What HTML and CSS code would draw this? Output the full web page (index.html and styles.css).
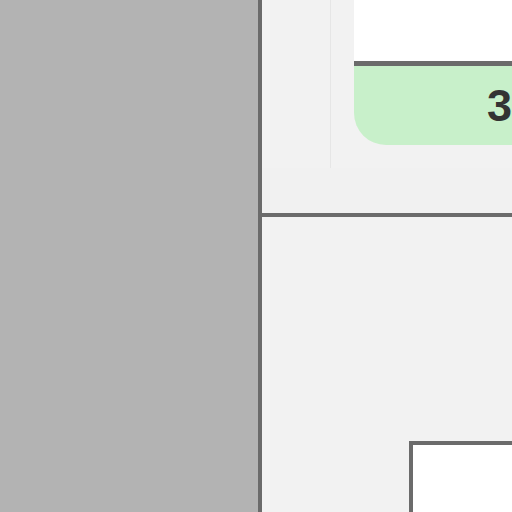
FILE: index.html
```html
<!DOCTYPE html>
<html>
<head>
<meta charset="utf-8">
<link rel="stylesheet" href="styles.css">
</head>
<body>
<div class="app">
  <aside class="side"></aside>
  <main class="main">
    <section class="top">
      <div class="row">
        <div class="col"></div>
        <div class="cards">
          <div class="card-white"></div>
          <div class="card-green"><span class="num">3</span></div>
        </div>
      </div>
    </section>
    <section class="bottom">
      <div class="box"></div>
    </section>
  </main>
</div>
</body>
</html>
```
FILE: styles.css
```css
html, body {
  margin: 0;
  padding: 0;
  width: 512px;
  height: 512px;
  overflow: hidden;
  font-family: "Liberation Sans", Arial, sans-serif;
}
.app {
  display: flex;
  width: 512px;
  height: 512px;
}
.side {
  width: 258px;
  flex: none;
  background: #b3b3b3;
  border-right: 4px solid #6b6b6b;
}
.main {
  flex: 1;
  display: flex;
  flex-direction: column;
  background: #f2f2f2;
  min-width: 0;
}
.top {
  height: 213px;
  flex: none;
  border-bottom: 4px solid #6b6b6b;
  background: #f1f1f1;
}
.row {
  display: flex;
  height: 168px;
  background: #f2f2f2;
}
.col {
  width: 68px;
  flex: none;
  border-right: 1px solid #e6e6e6;
}
.cards {
  margin-left: 23px;
  flex: 1;
  display: flex;
  flex-direction: column;
}
.card-white {
  height: 61px;
  background: #ffffff;
}
.card-green {
  height: 79px;
  border-top: 5px solid #6b6b6b;
  background: #c8f0ca;
  border-bottom-left-radius: 32px;
  display: flex;
  align-items: center;
  justify-content: flex-end;
}
.num {
  font-family: "Liberation Sans", Arial, sans-serif;
  font-size: 45px;
  font-weight: bold;
  color: #333333;
  margin-right: 0;
  line-height: 1;
}
.bottom {
  flex: 1;
  padding: 224px 0 0 147px;
}
.box {
  height: 67px;
  background: #ffffff;
  border-top: 4px solid #6b6b6b;
  border-left: 4px solid #6b6b6b;
}
```
